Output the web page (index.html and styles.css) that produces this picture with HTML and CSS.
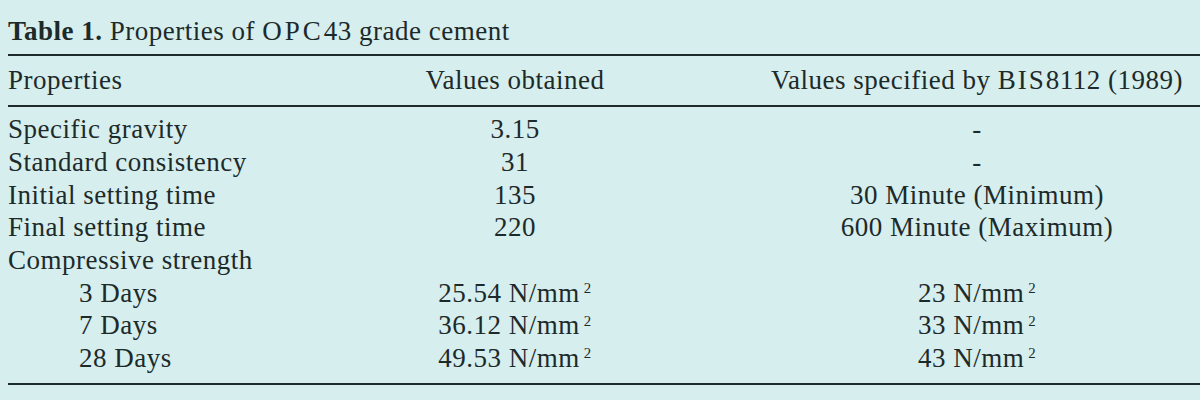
FILE: index.html
```html
<!DOCTYPE html>
<html>
<head>
<meta charset="utf-8">
<link rel="stylesheet" href="styles.css">
</head>
<body>
<div class="page">
  <div class="caption"><b>Table 1.</b> Properties of <span class="sp">OPC</span>43 grade cement</div>
  <table class="tbl">
    <colgroup>
      <col class="c1"><col class="c2"><col class="c3">
    </colgroup>
    <thead>
      <tr>
        <th class="left">Properties</th>
        <th>Values obtained</th>
        <th class="last">Values specified by <span class="sp2">BIS</span>8112 (1989)</th>
      </tr>
    </thead>
    <tbody>
      <tr class="first"><td class="left">Specific gravity</td><td>3.15</td><td class="last">-</td></tr>
      <tr><td class="left">Standard consistency</td><td>31</td><td class="last">-</td></tr>
      <tr><td class="left">Initial setting time</td><td>135</td><td class="last">30 Minute (Minimum)</td></tr>
      <tr><td class="left">Final setting time</td><td>220</td><td class="last">600 Minute (Maximum)</td></tr>
      <tr><td class="left">Compressive strength</td><td></td><td class="last"></td></tr>
      <tr><td class="left indent">3 Days</td><td>25.54 N/mm<sup>2</sup></td><td class="last">23 N/mm<sup>2</sup></td></tr>
      <tr><td class="left indent">7 Days</td><td>36.12 N/mm<sup>2</sup></td><td class="last">33 N/mm<sup>2</sup></td></tr>
      <tr class="lastrow"><td class="left indent">28 Days</td><td>49.53 N/mm<sup>2</sup></td><td class="last">43 N/mm<sup>2</sup></td></tr>
    </tbody>
  </table>
</div>
</body>
</html>
```
FILE: styles.css
```css
html, body {
  margin: 0;
  padding: 0;
  background: #d6eeee;
}
body {
  width: 1200px;
  height: 400px;
  overflow: hidden;
  font-family: "Liberation Serif", "Times New Roman", serif;
  color: #1d2a2a;
}
.page {
  padding: 16px 0 0 8px;
}
.caption {
  font-size: 27px;
  line-height: 30px;
  height: 38px;
  letter-spacing: 0.5px;
}
.caption b {
  font-weight: bold;
}
.sp {
  letter-spacing: 3px;
}
.sp2 {
  letter-spacing: 2px;
}
.tbl {
  width: 1192px;
  border-collapse: collapse;
  table-layout: fixed;
  border-top: 2px solid #1d2a2a;
  border-bottom: 2px solid #1d2a2a;
  font-size: 27px;
  letter-spacing: 0.5px;
}
.c1 { width: 258px; }
.c2 { width: 498px; }
.c3 { width: 436px; }
.tbl th {
  font-weight: normal;
  height: 49px;
  padding: 0;
  text-align: center;
  border-bottom: 2px solid #1d2a2a;
}
.tbl td {
  padding: 0;
  height: 32.7px;
  line-height: 30px;
  text-align: center;
  white-space: nowrap;
}
.tbl .left {
  text-align: left;
}
.tbl .last {
  padding-right: 10px;
}
.tbl .indent {
  padding-left: 71px;
}
.tbl tr.first td {
  padding-top: 6px;
}
.tbl tr.lastrow td {
  padding-bottom: 8px;
}
sup {
  font-size: 0.55em;
  vertical-align: 0.6em;
  line-height: 0;
  margin-left: 4px;
}
```
